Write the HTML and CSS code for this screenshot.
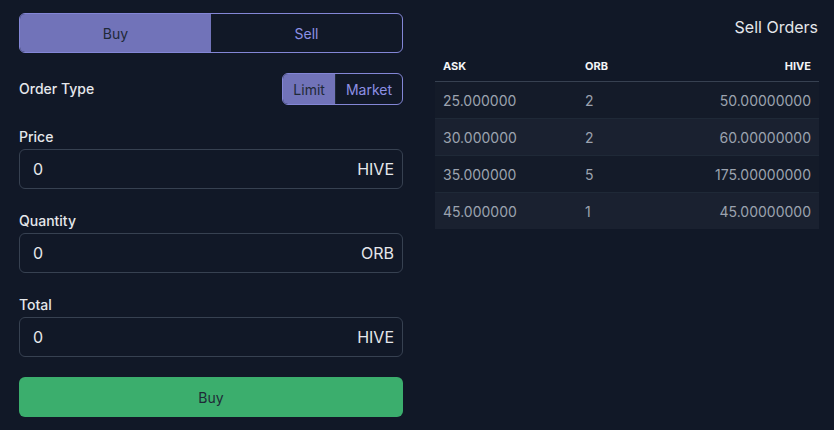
FILE: index.html
```html
<!DOCTYPE html>
<html lang="en">
<head>
    <meta charset="UTF-8">
    <meta name="viewport" content="width=device-width, initial-scale=1.0">
    <title>Market - ORB/HIVE</title>
    <link rel="stylesheet" href="styles.css">
</head>
<body>
    <div class="market">
        <div class="order-form">
            <div class="side-toggle">
                <button class="side active">Buy</button>
                <button class="side">Sell</button>
            </div>

            <div class="order-type">
                <span class="field-label">Order Type</span>
                <div class="type-toggle">
                    <button class="type active">Limit</button>
                    <button class="type">Market</button>
                </div>
            </div>

            <div class="form-group">
                <label class="field-label" for="price">Price</label>
                <div class="input-wrap">
                    <input type="text" id="price" value="0">
                    <span class="unit">HIVE</span>
                </div>
            </div>

            <div class="form-group">
                <label class="field-label" for="quantity">Quantity</label>
                <div class="input-wrap">
                    <input type="text" id="quantity" value="0">
                    <span class="unit">ORB</span>
                </div>
            </div>

            <div class="form-group">
                <label class="field-label" for="total">Total</label>
                <div class="input-wrap">
                    <input type="text" id="total" value="0">
                    <span class="unit">HIVE</span>
                </div>
            </div>

            <button class="submit">Buy</button>
        </div>

        <div class="orders">
            <h2>Sell Orders</h2>
            <table>
                <thead>
                    <tr>
                        <th>Ask</th>
                        <th>ORB</th>
                        <th class="num">HIVE</th>
                    </tr>
                </thead>
                <tbody>
                    <tr><td>25.000000</td><td>2</td><td class="num">50.00000000</td></tr>
                    <tr><td>30.000000</td><td>2</td><td class="num">60.00000000</td></tr>
                    <tr><td>35.000000</td><td>5</td><td class="num">175.00000000</td></tr>
                    <tr><td>45.000000</td><td>1</td><td class="num">45.00000000</td></tr>
                </tbody>
            </table>
        </div>
    </div>
</body>
</html>
```

FILE: styles.css
```css
body {
    margin: 0;
    background-color: #111827;
    font-family: Inter, "Noto Sans", sans-serif;
    color: #e5e7eb;
}
.market {
    display: grid;
    grid-template-columns: 384px 384px;
    column-gap: 32px;
    padding: 13px 15px 0 19px;
}
button {
    font-family: inherit;
    cursor: pointer;
}
.side-toggle {
    display: flex;
    height: 40px;
    border: 1px solid #8386d6;
    border-radius: 6px;
    overflow: hidden;
    box-sizing: border-box;
}
.side {
    flex: 1;
    border: none;
    background: transparent;
    color: #8d90e4;
    font-size: 14px;
}
.side.active {
    background-color: #7173b9;
    color: #1f2937;
}
.order-type {
    display: flex;
    justify-content: space-between;
    align-items: center;
    margin-top: 20px;
}
.field-label {
    display: block;
    font-size: 14px;
    line-height: 20px;
    font-weight: 500;
    color: #e5e7eb;
}
.type-toggle {
    display: flex;
    height: 32px;
    border: 1px solid #8386d6;
    border-radius: 6px;
    overflow: hidden;
    box-sizing: border-box;
}
.type {
    border: none;
    background: transparent;
    color: #8d90e4;
    font-size: 14px;
    padding: 0 10px;
}
.type.active {
    background-color: #7173b9;
    color: #1f2937;
    border-right: 1px solid #1f2937;
}
.form-group {
    margin-top: 22px;
}
.form-group .field-label {
    margin-bottom: 2px;
}
.input-wrap {
    display: flex;
    align-items: center;
    height: 40px;
    border: 1px solid #374151;
    border-radius: 6px;
    box-sizing: border-box;
    padding: 0 8px 0 13px;
}
.input-wrap input {
    flex: 1;
    background: transparent;
    border: none;
    outline: none;
    color: #e5e7eb;
    font-family: inherit;
    font-size: 16px;
    padding: 0;
}
.unit {
    font-size: 16px;
    color: #e5e7eb;
}
.submit {
    width: 100%;
    height: 40px;
    margin-top: 20px;
    border: none;
    border-radius: 6px;
    background-color: #3bae6d;
    color: #1f2937;
    font-size: 14px;
}
.orders h2 {
    margin: 4px 1px 0 0;
    text-align: right;
    font-size: 16px;
    font-weight: 400;
    line-height: 20px;
    color: #e5e7eb;
}
table {
    width: 100%;
    margin-top: 12px;
    border-collapse: collapse;
}
th {
    text-align: left;
    font-size: 11px;
    font-weight: 700;
    text-transform: uppercase;
    color: #f3f4f6;
    padding: 10px 8px 8px;
    border-bottom: 1px solid #374151;
}
td {
    font-size: 14px;
    color: #9ca3af;
    padding: 0 8px;
    height: 36px;
    border-bottom: 1px solid #1f2937;
}
th:first-child, td:first-child {
    width: 126px;
}
tbody tr {
    background-color: #141b29;
}
tbody tr:nth-child(even) {
    background-color: #1a2130;
}
tbody tr:last-child td {
    border-bottom: none;
}
.num {
    text-align: right;
}
```
